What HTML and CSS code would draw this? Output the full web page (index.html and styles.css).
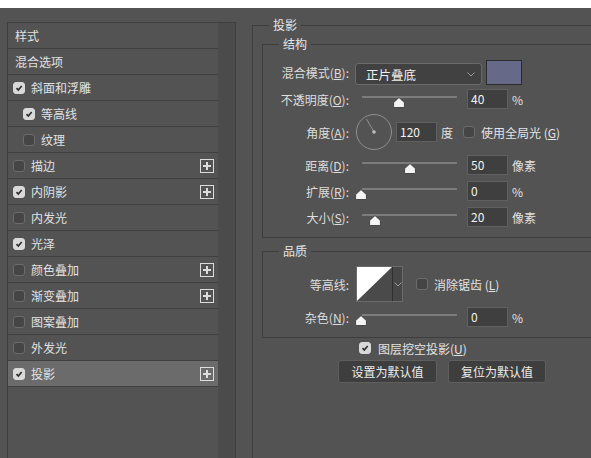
FILE: index.html
```html
<!DOCTYPE html>
<html lang="zh-CN">
<head>
<meta charset="utf-8">
<title>图层样式 - 投影</title>
<link rel="stylesheet" href="styles.css">
</head>
<body>
<div class="topbar"></div>
<div class="main">
  <div class="styles-panel">
    <ul class="style-list">
      <li class="row plain">样式</li>
      <li class="row plain">混合选项</li>
      <li class="row"><span class="cb on"><svg viewBox="0 0 12 12"><path d="M3 6.2 L5.2 8.4 L9.2 3.6"/></svg></span>斜面和浮雕</li>
      <li class="row sub"><span class="cb on"><svg viewBox="0 0 12 12"><path d="M3 6.2 L5.2 8.4 L9.2 3.6"/></svg></span>等高线</li>
      <li class="row sub"><span class="cb"></span>纹理</li>
      <li class="row"><span class="cb"></span>描边<svg class="plus" viewBox="0 0 14 14"><rect x="0.5" y="0.5" width="13" height="13"/><path d="M7 3v8M3 7h8"/></svg></li>
      <li class="row"><span class="cb on"><svg viewBox="0 0 12 12"><path d="M3 6.2 L5.2 8.4 L9.2 3.6"/></svg></span>内阴影<svg class="plus" viewBox="0 0 14 14"><rect x="0.5" y="0.5" width="13" height="13"/><path d="M7 3v8M3 7h8"/></svg></li>
      <li class="row"><span class="cb"></span>内发光</li>
      <li class="row"><span class="cb on"><svg viewBox="0 0 12 12"><path d="M3 6.2 L5.2 8.4 L9.2 3.6"/></svg></span>光泽</li>
      <li class="row"><span class="cb"></span>颜色叠加<svg class="plus" viewBox="0 0 14 14"><rect x="0.5" y="0.5" width="13" height="13"/><path d="M7 3v8M3 7h8"/></svg></li>
      <li class="row"><span class="cb"></span>渐变叠加<svg class="plus" viewBox="0 0 14 14"><rect x="0.5" y="0.5" width="13" height="13"/><path d="M7 3v8M3 7h8"/></svg></li>
      <li class="row"><span class="cb"></span>图案叠加</li>
      <li class="row"><span class="cb"></span>外发光</li>
      <li class="row selected"><span class="cb on"><svg viewBox="0 0 12 12"><path d="M3 6.2 L5.2 8.4 L9.2 3.6"/></svg></span>投影<svg class="plus" viewBox="0 0 14 14"><rect x="0.5" y="0.5" width="13" height="13"/><path d="M7 3v8M3 7h8"/></svg></li>
    </ul>
    <div class="scroll"></div>
  </div>

  <div class="settings">
    <fieldset class="group outer">
      <legend>投影</legend>

      <fieldset class="group inner struct">
        <legend>结构</legend>
        <div class="frow r-blend">
          <span class="lbl">混合模式(<u>B</u>):</span>
          <div class="select"><span>正片叠底</span><svg class="chev" viewBox="0 0 8 5"><path d="M0.5 0.5 L4 4 L7.5 0.5"/></svg></div>
          <div class="swatch"></div>
        </div>
        <div class="frow">
          <span class="lbl">不透明度(<u>O</u>):</span>
          <div class="slider"><div class="track"></div><svg class="thumb" style="left:31px" viewBox="0 0 12 11"><path d="M6 0.6 L11.4 5.6 L11.4 9.5 Q11.4 10.5 10.4 10.5 L1.6 10.5 Q0.6 10.5 0.6 9.5 L0.6 5.6 Z"/></svg></div>
          <div class="num">40</div><span class="unit">%</span>
        </div>
        <div class="frow r-angle">
          <span class="lbl">角度(<u>A</u>):</span>
          <svg class="dial" viewBox="0 0 36 36"><circle cx="18" cy="18" r="17.5"/><line x1="18" y1="18" x2="10.5" y2="5"/><circle class="dot" cx="18" cy="18" r="1.8"/></svg>
          <div class="num">120</div><span class="unit">度</span>
          <span class="cb gl"></span><span class="cbtext">使用全局光 (<u>G</u>)</span>
        </div>
        <div class="frow">
          <span class="lbl">距离(<u>D</u>):</span>
          <div class="slider"><div class="track"></div><svg class="thumb" style="left:42px" viewBox="0 0 12 11"><path d="M6 0.6 L11.4 5.6 L11.4 9.5 Q11.4 10.5 10.4 10.5 L1.6 10.5 Q0.6 10.5 0.6 9.5 L0.6 5.6 Z"/></svg></div>
          <div class="num">50</div><span class="unit">像素</span>
        </div>
        <div class="frow">
          <span class="lbl">扩展(<u>R</u>):</span>
          <div class="slider"><div class="track"></div><svg class="thumb" style="left:-7px" viewBox="0 0 12 11"><path d="M6 0.6 L11.4 5.6 L11.4 9.5 Q11.4 10.5 10.4 10.5 L1.6 10.5 Q0.6 10.5 0.6 9.5 L0.6 5.6 Z"/></svg></div>
          <div class="num">0</div><span class="unit">%</span>
        </div>
        <div class="frow">
          <span class="lbl">大小(<u>S</u>):</span>
          <div class="slider"><div class="track"></div><svg class="thumb" style="left:7px" viewBox="0 0 12 11"><path d="M6 0.6 L11.4 5.6 L11.4 9.5 Q11.4 10.5 10.4 10.5 L1.6 10.5 Q0.6 10.5 0.6 9.5 L0.6 5.6 Z"/></svg></div>
          <div class="num">20</div><span class="unit">像素</span>
        </div>
      </fieldset>

      <fieldset class="group inner quality">
        <legend>品质</legend>
        <div class="frow r-contour">
          <span class="lbl">等高线:</span>
          <div class="contour">
            <svg class="curve" viewBox="0 0 35 34" preserveAspectRatio="none"><rect width="35" height="34" fill="#4a4a4a"/><path d="M0 0 H35 L0 34 Z" fill="#ffffff"/></svg>
            <div class="cdrop"><svg class="chev" viewBox="0 0 8 5"><path d="M0.5 0.5 L4 4 L7.5 0.5"/></svg></div>
          </div>
          <span class="cb aa"></span><span class="cbtext">消除锯齿 (<u>L</u>)</span>
        </div>
        <div class="frow r-noise">
          <span class="lbl">杂色(<u>N</u>):</span>
          <div class="slider"><div class="track"></div><svg class="thumb" style="left:-7px" viewBox="0 0 12 11"><path d="M6 0.6 L11.4 5.6 L11.4 9.5 Q11.4 10.5 10.4 10.5 L1.6 10.5 Q0.6 10.5 0.6 9.5 L0.6 5.6 Z"/></svg></div>
          <div class="num">0</div><span class="unit">%</span>
        </div>
      </fieldset>

      <div class="knockout">
        <span class="cb on"><svg viewBox="0 0 12 12"><path d="M3 6.2 L5.2 8.4 L9.2 3.6"/></svg></span><span class="cbtext">图层挖空投影(<u>U</u>)</span>
      </div>
      <div class="buttons">
        <button class="btn btn-set">设置为默认值</button>
        <button class="btn btn-reset">复位为默认值</button>
      </div>
    </fieldset>
  </div>
</div>
</body>
</html>
```
FILE: styles.css
```css
* { box-sizing: border-box; }
html, body { margin: 0; padding: 0; }
body {
  background: #535353;
  color: #e4e4e4;
  font-family: "Noto Sans CJK SC", "Noto Sans", "Liberation Sans", sans-serif;
  font-size: 12px;
  width: 591px;
  height: 458px;
  overflow: hidden;
}
u { text-decoration: underline; text-underline-offset: 1px; }

.topbar { height: 8px; background: #ffffff; }
.main { display: flex; align-items: flex-start; }

/* left style list */
.styles-panel {
  margin: 14px 0 0 7px;
  width: 229px;
  height: 436px;
  border: 1px solid #3f3f3f;
  border-bottom: none;
  display: flex;
}
.style-list { list-style: none; margin: 0; padding: 0; width: 210px; }
.scroll { width: 17px; background: #4b4b4b; }
.row {
  height: 26px;
  display: flex;
  align-items: center;
  gap: 6px;
  padding-left: 5px;
  border-bottom: 1px solid #404040;
  white-space: nowrap;
  color: #e2e2e2;
}
.row.plain { padding-left: 7px; }
.row.sub { padding-left: 15px; }
.row.selected { background: #6b6b6b; }

.cb {
  width: 12px;
  height: 12px;
  flex: none;
  border-radius: 3px;
  background: #454545;
  border: 1px solid #6c6c6c;
  display: inline-flex;
}
.cb.on { background: #d9d9d9; border-color: #d9d9d9; }
.cb svg { width: 10px; height: 10px; fill: none; stroke: #2e2e2e; stroke-width: 2; }
.plus {
  margin-left: auto;
  margin-right: 4px;
  width: 14px;
  height: 14px;
  fill: none;
  stroke: #dcdcdc;
  stroke-width: 1;
}
.plus path { stroke-width: 2; }

/* right settings */
.settings { margin: 9px 0 0 16px; }
fieldset { margin: 0; padding: 0; border: 1px solid #3e3e3e; min-width: 0; }
legend { padding: 0 4px; line-height: 16px; font-size: 12px; color: #e6e6e6; }
.outer {
  width: 339px;
  height: 441px;
  padding: 0 0 0 9px;
  border-right: none;
  border-bottom: none;
}
.outer > legend { margin-left: 7px; }
.inner { width: 329px; border-right: none; }
.inner > legend { margin-left: 16px; }
.struct { margin-top: 3px; padding: 8px 0 7px 0; }
.quality { margin-top: 5px; padding: 4px 0 8px 0; }

.frow { display: flex; align-items: center; height: 26px; white-space: nowrap; }
.lbl { width: 86px; margin-right: 6px; text-align: right; color: #dedede; }
.r-blend { align-items: flex-end; padding-bottom: 1px; }
.r-blend .lbl { align-self: center; }
.r-angle { height: 40px; }
.r-contour { height: 42px; }
.r-noise { height: 24px; }

.select {
  width: 127px;
  height: 22px;
  border: 1px solid #6a6a6a;
  border-radius: 3px;
  background: #414141;
  display: flex;
  align-items: center;
  padding: 0 6px 0 10px;
  color: #f0f0f0;
  font-size: 12.5px;
}
.select span { flex: 1; }
.chev { width: 8px; height: 5px; fill: none; stroke: #9a9a9a; stroke-width: 1; }
.swatch {
  margin-left: 4px;
  width: 36px;
  height: 25px;
  background: #676988;
  border: 1px solid #2c2c2c;
}

.slider { position: relative; width: 95px; height: 20px; margin-left: 7px; }
.track { margin-top: 7px; height: 2px; background: #7c7c7c; }
.thumb {
  position: absolute;
  top: 8px;
  width: 12px;
  height: 11px;
  fill: #f4f4f4;
  stroke: #2e2e2e;
  stroke-width: 0.8;
}

.num {
  margin-left: 10px;
  width: 41px;
  height: 20px;
  background: #3f3f3f;
  border: 1px solid #606060;
  padding-left: 3px;
  line-height: 18px;
  color: #f2f2f2;
  font-size: 12px;
}
.unit { margin-left: 4px; color: #e0e0e0; }

.dial { margin-left: 1px; width: 36px; height: 36px; fill: none; stroke: #909090; stroke-width: 1; }
.dial .dot { fill: #bdbdbd; stroke: none; }
.r-angle .num { margin-left: 4px; }
.r-angle .unit { margin-left: 4px; }
.cb.gl { margin-left: 10px; }
.cbtext { margin-left: 6px; color: #e4e4e4; }

.contour {
  margin-left: 1px;
  width: 47px;
  height: 36px;
  border: 1px solid #6a6a6a;
  display: flex;
  background: #474747;
}
.curve { width: 35px; height: 34px; display: block; }
.cdrop {
  flex: 1;
  border-left: 1px solid #2f2f2f;
  display: flex;
  align-items: center;
  justify-content: center;
}
.cb.aa { margin-left: 13px; }

.knockout { display: flex; align-items: center; height: 20px; padding-left: 97px; }
.knockout .cbtext { margin-left: 7px; }

.buttons { display: flex; gap: 11px; margin-top: 2px; padding-left: 76px; }
.btn {
  height: 23px;
  padding: 0;
  border: 1px solid #5e5e5e;
  border-radius: 3px;
  background: #3e3e3e;
  color: #ececec;
  font-family: inherit;
  font-size: 12px;
}
.btn-set { width: 99px; }
.btn-reset { width: 98px; }
```
